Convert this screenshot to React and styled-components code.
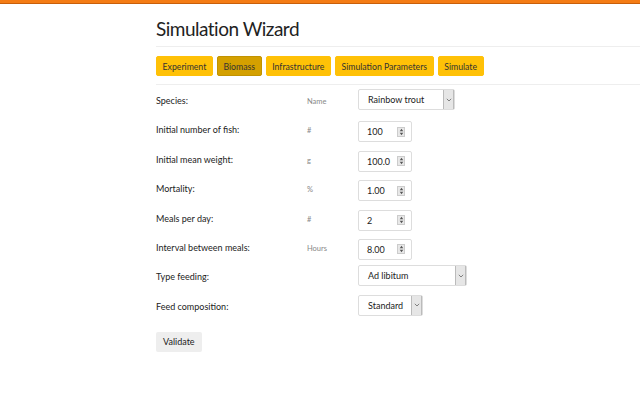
import React from 'react';
import styled, { createGlobalStyle } from 'styled-components';

const GlobalStyle = createGlobalStyle`
	body {
		margin: 0;
		background: #fff;
		font-family: Lato, 'Open Sans', 'Liberation Sans', sans-serif;
		color: #212529;
	}
`;

const tabs = ['Experiment', 'Biomass', 'Infrastructure', 'Simulation Parameters', 'Simulate'];

const fields = [
	{ label: 'Species:', unit: 'Name', type: 'select', value: 'Rainbow trout', width: 97 },
	{ label: 'Initial number of fish:', unit: '#', type: 'number', value: '100' },
	{ label: 'Initial mean weight:', unit: 'g', type: 'number', value: '100.0' },
	{ label: 'Mortality:', unit: '%', type: 'number', value: '1.00' },
	{ label: 'Meals per day:', unit: '#', type: 'number', value: '2' },
	{ label: 'Interval between meals:', unit: 'Hours', type: 'number', value: '8.00' },
	{ label: 'Type feeding:', unit: '', type: 'select', value: 'Ad libitum', width: 109 },
	{ label: 'Feed composition:', unit: '', type: 'select', value: 'Standard', width: 65 },
];

const Spinner = () => (
	<StyledSpinner>
		<svg width="5" height="8" viewBox="0 0 5 8">
			<path d="M2.5 0.8 L4.3 3.2 H0.7 Z" fill="#555" />
			<path d="M2.5 7.2 L4.3 4.8 H0.7 Z" fill="#555" />
		</svg>
	</StyledSpinner>
);

const Field = ({ field }) => {
	if (field.type === 'select') {
		return (
			<StyledSelect $width={field.width}>
				<span className="value">{field.value}</span>
				<span className="arrow">
					<svg width="6" height="4" viewBox="0 0 6 4">
						<path d="M0.8 0.8 L3 3 L5.2 0.8" stroke="#666" strokeWidth="0.8" fill="none" />
					</svg>
				</span>
			</StyledSelect>
		);
	}
	return (
		<StyledNumber>
			<span>{field.value}</span>
			<Spinner />
		</StyledNumber>
	);
};

const App = () => {
	return (
		<>
			<GlobalStyle />
			<TopBar />
			<Container>
				<Title>Simulation Wizard</Title>
				<TabBar>
					{tabs.map((tab) => (
						<Tab key={tab} $active={tab === 'Biomass'}>{tab}</Tab>
					))}
				</TabBar>
				<Form>
					{fields.map((field) => (
						<Row key={field.label}>
							<Label>{field.label}</Label>
							<Unit>{field.unit}</Unit>
							<Field field={field} />
						</Row>
					))}
				</Form>
				<ValidateButton>Validate</ValidateButton>
			</Container>
		</>
	);
};

export default App;

const TopBar = styled.div`
	height: 3px;
	background: #f47c14;
	border-bottom: 1px solid #c85f0a;
`;

const Container = styled.div`
	margin-left: 156px;
`;

const Title = styled.h1`
	margin: 0;
	padding: 14px 0 6px;
	font-size: 19px;
	font-weight: 400;
	letter-spacing: -0.5px;
	line-height: 22px;
	color: #222;
	border-bottom: 1px solid #eee;
`;

const TabBar = styled.div`
	display: flex;
	gap: 4px;
	padding: 9px 0 8px;
	border-bottom: 1px solid #eee;
`;

const Tab = styled.div`
	height: 20px;
	padding: 0 5.6px;
	display: flex;
	align-items: center;
	font-size: 8.7px;
	color: #333;
	border-radius: 2px;
	background: ${(p) => (p.$active ? '#d4a000' : '#ffc107')};
	border: 1px solid ${(p) => (p.$active ? '#c29300' : '#ffc107')};
	box-sizing: border-box;
`;

const Form = styled.div`
	display: flex;
	flex-direction: column;
	padding-top: 9px;
`;

const Row = styled.div`
	display: grid;
	grid-template-columns: 151px 51px auto;
	align-items: start;
	height: 29.4px;
`;

const Label = styled.div`
	font-size: 9px;
	line-height: 12px;
	padding-top: 1px;
	color: #222;
`;

const Unit = styled.div`
	font-size: 7.5px;
	line-height: 12px;
	padding-top: 2px;
	color: #888;
`;

const StyledNumber = styled.div`
	width: 54px;
	height: 21px;
	box-sizing: border-box;
	border: 1px solid #ddd;
	border-radius: 2px;
	display: flex;
	align-items: center;
	justify-content: space-between;
	padding: 0 6px 0 8px;
	font-size: 9px;
	color: #222;
	margin-top: -2px;
`;

const StyledSpinner = styled.span`
	width: 6px;
	height: 8px;
	display: flex;
	align-items: center;
	justify-content: center;
	background: #e8e8e8;
	border: 1px solid #ccc;
`;

const StyledSelect = styled.div`
	width: ${(p) => p.$width}px;
	height: 21px;
	box-sizing: border-box;
	border: 1px solid #ddd;
	border-radius: 2px;
	display: flex;
	align-items: stretch;
	font-size: 9px;
	color: #222;
	margin-top: -5px;

	.value {
		flex: 1;
		display: flex;
		align-items: center;
		padding-left: 9px;
	}

	.arrow {
		width: 9px;
		display: flex;
		align-items: center;
		justify-content: center;
		background: #e6e6e6;
		border-left: 1px solid #bbb;
		border-right: 1px solid #bbb;
	}
`;

const ValidateButton = styled.div`
	display: inline-flex;
	align-items: center;
	height: 20px;
	padding: 0 7px;
	margin-top: -15px;
	background: #eee;
	border-radius: 2px;
	font-size: 9px;
	color: #222;
`;
